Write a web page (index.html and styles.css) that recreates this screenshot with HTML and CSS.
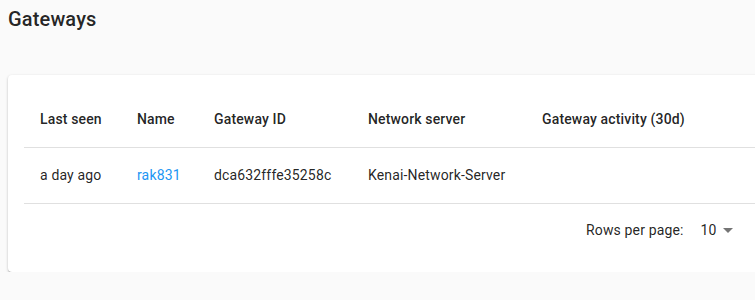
FILE: index.html
```html
<!DOCTYPE html>
<html lang="en">
<head>
  <meta charset="UTF-8">
  <title>Gateways</title>
  <link rel="stylesheet" href="styles.css">
</head>
<body>

  <!-- Page title -->
  <div class="page-header">
    <h1>Gateways</h1>
  </div>

  <!-- Gateways table -->
  <div class="card">
    <table class="gw-table">
      <thead>
        <tr>
          <th class="col-seen">Last seen</th>
          <th class="col-name">Name</th>
          <th class="col-id">Gateway ID</th>
          <th class="col-ns">Network server</th>
          <th class="col-activity">Gateway activity (30d)</th>
        </tr>
      </thead>
      <tbody>
        <tr>
          <td>a day ago</td>
          <td><a href="#">rak831</a></td>
          <td>dca632fffe35258c</td>
          <td>Kenai-Network-Server</td>
          <td></td>
        </tr>
      </tbody>
    </table>

    <div class="pagination">
      <span class="caption">Rows per page:</span>
      <div class="rows-select">
        <span>10</span>
        <svg class="select-icon" viewBox="0 0 24 24" width="24" height="24"><path d="M7 10l5 5 5-5z"/></svg>
      </div>
    </div>
  </div>

</body>
</html>
```

FILE: styles.css
```css
* { margin: 0; padding: 0; box-sizing: border-box; }
html, body { overflow: hidden; }
body {
  font-family: Roboto, 'Liberation Sans', sans-serif;
  background: #fafafa;
  color: rgba(0, 0, 0, 0.87);
  padding: 0 8px;
  width: 1000px;
}
.page-header {
  height: 75px;
  padding-top: 7px;
}
h1 {
  font-size: 20px;
  font-weight: 500;
  line-height: 24px;
  letter-spacing: 0.15px;
}
.card {
  background: #fff;
  border-radius: 4px;
  padding: 16px;
  width: 940px;
  box-shadow: 0 1px 3px 0 rgba(0,0,0,0.2), 0 1px 1px 0 rgba(0,0,0,0.14), 0 2px 1px -1px rgba(0,0,0,0.12);
}
.gw-table {
  width: 100%;
  border-collapse: collapse;
  font-size: 14px;
  letter-spacing: 0.15px;
}
.gw-table th, .gw-table td {
  text-align: left;
  padding: 0 16px;
  height: 56px;
  border-bottom: 1px solid #e0e0e0;
  white-space: nowrap;
}
.gw-table th { font-weight: 500; }
.gw-table td { font-weight: 400; }
.col-seen { width: 97px; }
.col-name { width: 77px; }
.col-id { width: 154px; }
.col-ns { width: 174px; }
.gw-table a { color: #2196f3; text-decoration: none; }
.pagination {
  display: flex;
  align-items: center;
  height: 52px;
  padding-left: 562px;
  font-size: 14px;
  letter-spacing: 0.15px;
}
.caption { white-space: nowrap; }
.rows-select {
  display: flex;
  align-items: center;
  margin-left: 17px;
}
.select-icon { fill: rgba(0,0,0,0.54); margin-left: -1px; }
```
